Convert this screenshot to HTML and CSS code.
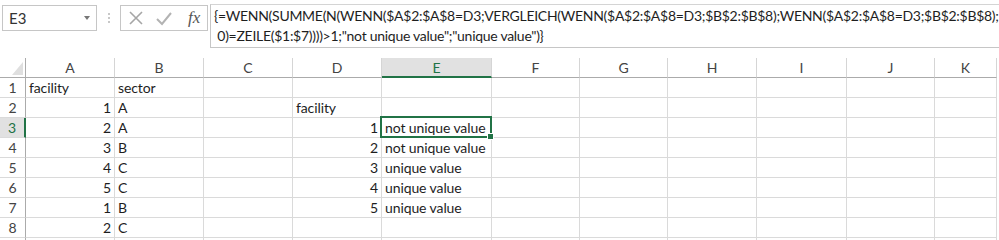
FILE: index.html
```html
<!DOCTYPE html>
<html lang="de">
<head>
  <meta charset="UTF-8">
  <title>Excel - eindeutige Werte</title>
  <link rel="stylesheet" href="styles.css">
</head>
<body>
  <div class="formula-row">
    <div class="name-box">
      <span>E3</span>
      <span class="caret"></span>
    </div>
    <div class="grip"><i></i><i></i><i></i></div>
    <div class="fx-buttons">
      <svg class="btn" width="16" height="16" viewBox="0 0 16 16"><path d="M2 2 L14 14 M14 2 L2 14" stroke="#a6a6a6" stroke-width="1.6" fill="none"/></svg>
      <svg class="btn" width="18" height="16" viewBox="0 0 18 16"><path d="M2 9 L7 14 L16 3" stroke="#b3b3b3" stroke-width="2" fill="none"/></svg>
      <span class="fx">fx</span>
    </div>
    <div class="formula">{=WENN(SUMME(N(WENN($A$2:$A$8=D3;VERGLEICH(WENN($A$2:$A$8=D3;$B$2:$B$8);WENN($A$2:$A$8=D3;$B$2:$B$8);<br>&nbsp;0)=ZEILE($1:$7))))&gt;1;"not unique value";"unique value")}</div>
  </div>

  <div class="sheet">
    <div class="corner"><svg width="11" height="13" viewBox="0 0 11 13"><path d="M11 0 L11 13 L0 13 Z" fill="#dfdfdf"/></svg></div>
    <div class="col">A</div><div class="col">B</div><div class="col">C</div><div class="col">D</div>
    <div class="col active">E</div><div class="col">F</div><div class="col">G</div><div class="col">H</div>
    <div class="col">I</div><div class="col">J</div><div class="col">K</div>

    <div class="row">1</div>
    <div class="cell">facility</div><div class="cell">sector</div><div class="cell"></div><div class="cell"></div>
    <div class="cell"></div><div class="cell"></div><div class="cell"></div><div class="cell"></div>
    <div class="cell"></div><div class="cell"></div><div class="cell"></div>

    <div class="row">2</div>
    <div class="cell num">1</div><div class="cell">A</div><div class="cell"></div><div class="cell">facility</div>
    <div class="cell"></div><div class="cell"></div><div class="cell"></div><div class="cell"></div>
    <div class="cell"></div><div class="cell"></div><div class="cell"></div>

    <div class="row active">3</div>
    <div class="cell num">2</div><div class="cell">A</div><div class="cell"></div><div class="cell num">1</div>
    <div class="cell selected">not unique value</div><div class="cell"></div><div class="cell"></div><div class="cell"></div>
    <div class="cell"></div><div class="cell"></div><div class="cell"></div>

    <div class="row">4</div>
    <div class="cell num">3</div><div class="cell">B</div><div class="cell"></div><div class="cell num">2</div>
    <div class="cell">not unique value</div><div class="cell"></div><div class="cell"></div><div class="cell"></div>
    <div class="cell"></div><div class="cell"></div><div class="cell"></div>

    <div class="row">5</div>
    <div class="cell num">4</div><div class="cell">C</div><div class="cell"></div><div class="cell num">3</div>
    <div class="cell">unique value</div><div class="cell"></div><div class="cell"></div><div class="cell"></div>
    <div class="cell"></div><div class="cell"></div><div class="cell"></div>

    <div class="row">6</div>
    <div class="cell num">5</div><div class="cell">C</div><div class="cell"></div><div class="cell num">4</div>
    <div class="cell">unique value</div><div class="cell"></div><div class="cell"></div><div class="cell"></div>
    <div class="cell"></div><div class="cell"></div><div class="cell"></div>

    <div class="row">7</div>
    <div class="cell num">1</div><div class="cell">B</div><div class="cell"></div><div class="cell num">5</div>
    <div class="cell">unique value</div><div class="cell"></div><div class="cell"></div><div class="cell"></div>
    <div class="cell"></div><div class="cell"></div><div class="cell"></div>

    <div class="row">8</div>
    <div class="cell num">2</div><div class="cell">C</div><div class="cell"></div><div class="cell"></div>
    <div class="cell"></div><div class="cell"></div><div class="cell"></div><div class="cell"></div>
    <div class="cell"></div><div class="cell"></div><div class="cell"></div>

    <div class="row"></div>
    <div class="cell"></div><div class="cell"></div><div class="cell"></div><div class="cell"></div>
    <div class="cell"></div><div class="cell"></div><div class="cell"></div><div class="cell"></div>
    <div class="cell"></div><div class="cell"></div><div class="cell"></div>
  </div>
</body>
</html>
```

FILE: styles.css
```css
:root {
  --grid-line: #dadada;
  --head-line: #ababab;
  --excel-green: #217346;
  --text-color: #1e1e1e;
  --head-text: #444;
}

* {
  margin: 0;
  padding: 0;
  box-sizing: border-box;
}

body {
  font-family: 'Lato', 'Liberation Sans', sans-serif;
  font-size: 14px;
  color: var(--text-color);
  background: #fff;
  width: 999px;
  height: 240px;
  overflow: hidden;
}

/* formula bar */

.formula-row {
  display: flex;
  align-items: flex-start;
  height: 58px;
  padding-top: 4px;
}

.formula-row > * {
  flex-shrink: 0;
}

.name-box {
  display: flex;
  align-items: center;
  justify-content: space-between;
  width: 95px;
  height: 26px;
  margin-top: 1px;
  margin-left: 2px;
  padding: 0 6px 0 6px;
  border: 1px solid #c6c6c6;
  font-size: 15px;
  color: #333;
}

.caret {
  width: 0;
  height: 0;
  border-left: 3px solid transparent;
  border-right: 3px solid transparent;
  border-top: 4px solid #777;
}

.grip {
  display: flex;
  flex-direction: column;
  align-items: center;
  gap: 2px;
  width: 23px;
  padding-top: 9px;
}

.grip i {
  display: block;
  width: 2px;
  height: 2px;
  background: #c8c8c8;
}

.fx-buttons {
  display: flex;
  align-items: center;
  gap: 11px;
  width: 88px;
  height: 26px;
  margin-top: 1px;
  padding-left: 7px;
  border: 1px solid #c6c6c6;
}

.fx {
  font-family: 'Liberation Serif', serif;
  font-style: italic;
  font-size: 17px;
  color: #555;
  margin-left: 4px;
}

.formula-row > .formula {
  flex: 1 1 auto;
  min-width: 0;
  height: 44px;
  margin-left: 2px;
  padding: 1px 0 0 3px;
  border-top: 1px solid #d4d4d4;
  border-left: 1px solid #c6c6c6;
  border-bottom: 1px solid #c6c6c6;
  line-height: 20px;
  font-size: 14px;
  white-space: nowrap;
  overflow: hidden;
  letter-spacing: -0.28px;
}

/* sheet */

.sheet {
  display: grid;
  grid-template-columns: 26px 89px 89px 89px 89px 110px 88px 88px 89px 90px 88px 62px;
  grid-auto-rows: 20px;
}

.corner {
  display: flex;
  align-items: flex-end;
  justify-content: flex-end;
  padding: 0 2px 2px 0;
  border-right: 1px solid var(--head-line);
  border-bottom: 1px solid var(--head-line);
}

.col {
  text-align: center;
  line-height: 19px;
  color: var(--head-text);
  border-right: 1px solid #d5d5d5;
  border-bottom: 1px solid var(--head-line);
}

.col.active {
  background: #e1e1e1;
  color: var(--excel-green);
  border-bottom: 2px solid var(--excel-green);
}

.row {
  text-align: center;
  line-height: 19px;
  color: var(--head-text);
  border-right: 1px solid var(--head-line);
  border-bottom: 1px solid var(--grid-line);
}

.row.active {
  background: #e1e1e1;
  color: var(--excel-green);
  border-right: 2px solid var(--excel-green);
}

.cell {
  padding: 0 3px;
  line-height: 19px;
  white-space: nowrap;
  overflow: hidden;
  letter-spacing: -0.1px;
  border-right: 1px solid var(--grid-line);
  border-bottom: 1px solid var(--grid-line);
}

.cell.num {
  text-align: right;
}

.cell.selected {
  position: relative;
  overflow: visible;
}

.cell.selected::before {
  content: '';
  position: absolute;
  top: -2px;
  left: -2px;
  right: -1px;
  bottom: -1px;
  border: 2px solid var(--excel-green);
}

.cell.selected::after {
  content: '';
  position: absolute;
  right: -3px;
  bottom: -3px;
  width: 5px;
  height: 5px;
  background: var(--excel-green);
  border: 1px solid #fff;
}
```
